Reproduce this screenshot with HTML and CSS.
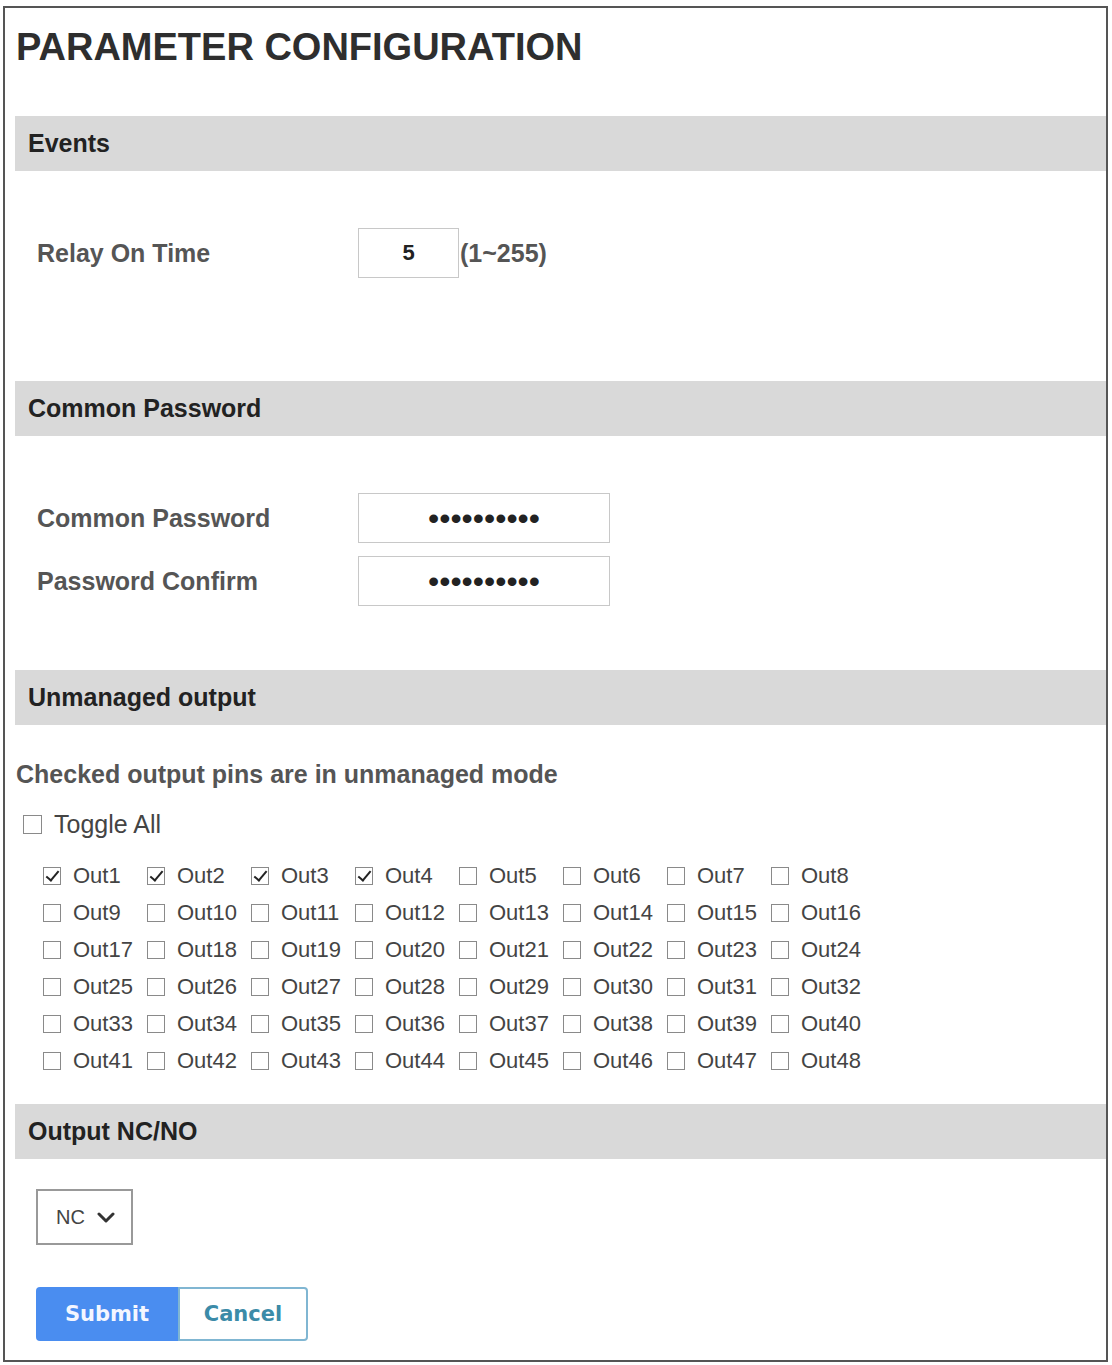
FILE: index.html
```html
<!DOCTYPE html>

<head>
  <title>Parameter Configuration</title>
  <link rel="stylesheet" href="styles.css">
</head>

<body>
  <div class="frame">
    <h1>PARAMETER CONFIGURATION</h1>

    <div class="bar">Events</div>
    <div class="relay-body">
      <div class="row">
        <label for="relay">Relay On Time</label>
        <input id="relay" class="num" type="text" value="5">
        <span class="hint">(1~255)</span>
      </div>
    </div>

    <div class="bar">Common Password</div>
    <div class="pass-body">
      <div class="row">
        <label for="pw">Common Password</label>
        <input id="pw" class="pass" type="password" value="1234567890">
      </div>
      <div class="row">
        <label for="pw2">Password Confirm</label>
        <input id="pw2" class="pass" type="password" value="1234567890">
      </div>
    </div>

    <div class="bar">Unmanaged output</div>
    <div class="unmanaged-body">
      <div class="note">Checked output pins are in unmanaged mode</div>
      <label class="toggle"><input id="toggleAll" type="checkbox" onclick="toggleAll(this)">Toggle All</label>
      <div class="outs" id="outs"></div>
    </div>

    <div class="bar">Output NC/NO</div>
    <div class="nc-body">
      <div class="select">
        <select>
          <option>NC</option>
          <option>NO</option>
        </select>
        <svg class="chev" width="18" height="11" viewBox="0 0 18 11">
          <path d="M2 2 L9 9 L16 2" fill="none" stroke="#333" stroke-width="3" stroke-linecap="round" stroke-linejoin="round"/>
        </svg>
      </div>
      <div class="actions">
        <button class="btn submit">Submit</button>
        <button class="btn cancel">Cancel</button>
      </div>
    </div>
  </div>

  <script>
    const outs = document.getElementById('outs');

    for (let i = 1; i <= 48; i++) {
      const item = document.createElement('label');
      item.className = 'out';
      item.innerHTML = `<input type="checkbox" ${i <= 4 ? 'checked' : ''}>Out${i}`;
      outs.appendChild(item);
    }

    const toggleAll = (box) =>
      outs.querySelectorAll('input').forEach(cb => cb.checked = box.checked);
  </script>
</body>

</html>
```

FILE: styles.css
```css
body {
  margin: 0;
  font-family: 'Liberation Sans', Arial, sans-serif;
  background: #fff;
  color: #444;
}

.frame {
  box-sizing: border-box;
  width: 1105px;
  height: 1356px;
  margin: 6px 0 0 3px;
  border: 2px solid #555;
  padding-left: 10px;
}

h1 {
  margin: 0 0 47px;
  padding: 17px 0 0 1px;
  height: 44px;
  line-height: 44px;
  font-size: 38px;
  font-weight: bold;
  color: #2e2e2e;
}

.bar {
  height: 55px;
  line-height: 55px;
  padding-left: 13px;
  background: #d9d9d9;
  font-size: 25px;
  font-weight: bold;
  color: #222;
}

.relay-body {
  padding: 57px 0 103px;
}

.pass-body {
  display: flex;
  flex-direction: column;
  gap: 13px;
  padding: 57px 0 64px;
}

.unmanaged-body {
  padding: 34px 0 25px;
}

.nc-body {
  padding-top: 30px;
}

.row {
  display: flex;
  align-items: center;
  height: 50px;
  padding-left: 22px;
}

.row label {
  width: 321px;
  font-size: 25px;
  font-weight: bold;
  color: #555;
}

.row input {
  box-sizing: border-box;
  height: 50px;
  margin: 0;
  padding: 0;
  border: 1px solid #c8c8c8;
  background: #fff;
  text-align: center;
  font-family: 'Liberation Sans', Arial, sans-serif;
  color: #222;
}

.num {
  width: 101px;
  font-size: 22px;
  font-weight: bold;
}

.pass {
  width: 252px;
  font-size: 32px;
  color: #111;
}

.hint {
  margin-left: 1px;
  font-size: 25px;
  font-weight: bold;
  color: #555;
}

.note {
  height: 30px;
  line-height: 30px;
  padding-left: 1px;
  font-size: 25px;
  font-weight: bold;
  color: #555;
}

.toggle {
  display: flex;
  align-items: center;
  height: 30px;
  margin-top: 20px;
  padding-left: 8px;
  font-size: 25px;
  color: #444;
}

.toggle input {
  width: 19px;
  height: 19px;
  margin-right: 12px;
}

.outs {
  display: grid;
  grid-template-columns: repeat(8, 104px);
  grid-auto-rows: 37px;
  margin-top: 18px;
  padding-left: 28px;
}

.out {
  display: flex;
  align-items: center;
  font-size: 22px;
  color: #444;
}

.out input {
  width: 18px;
  height: 18px;
  margin-right: 12px;
}

input[type=checkbox] {
  appearance: none;
  position: relative;
  box-sizing: border-box;
  margin-top: 0;
  margin-bottom: 0;
  margin-left: 0;
  border: 1px solid #8a8a8a;
  background: #fff;
  flex-shrink: 0;
}

input[type=checkbox]:checked::after {
  content: '';
  position: absolute;
  left: 5px;
  top: 0;
  width: 5px;
  height: 11px;
  border: solid #222;
  border-width: 0 2.5px 2.5px 0;
  transform: rotate(40deg);
}

.select {
  position: relative;
  width: 97px;
  height: 56px;
  margin-left: 21px;
}

.select select {
  appearance: none;
  box-sizing: border-box;
  width: 100%;
  height: 100%;
  padding-left: 18px;
  border: 2px solid #999;
  border-radius: 0;
  background: #fff;
  font-family: 'Liberation Sans', Arial, sans-serif;
  font-size: 20px;
  color: #444;
}

.chev {
  position: absolute;
  left: 61px;
  top: 23px;
  pointer-events: none;
}

.actions {
  display: flex;
  margin: 42px 0 0 21px;
}

.btn {
  height: 54px;
  font-family: 'DejaVu Sans', Verdana, sans-serif;
  font-size: 21px;
  font-weight: bold;
  cursor: pointer;
}

.submit {
  width: 142px;
  border: none;
  border-radius: 4px 0 0 4px;
  background: #4a8df0;
  color: #f4f6ff;
}

.cancel {
  width: 130px;
  border: 2px solid #80b6d2;
  border-radius: 0 4px 4px 0;
  background: #fff;
  color: #3b8ba8;
}
```
